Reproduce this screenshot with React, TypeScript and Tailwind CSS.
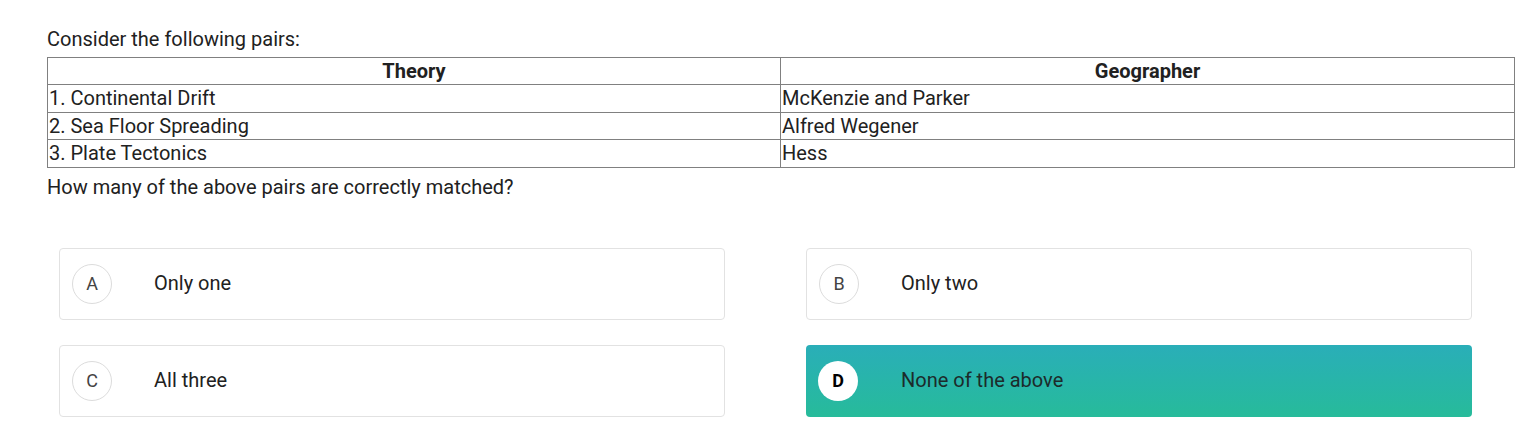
import React from "react";

const rows = [
  ["1. Continental Drift", "McKenzie and Parker"],
  ["2. Sea Floor Spreading", "Alfred Wegener"],
  ["3. Plate Tectonics", "Hess"],
];

const options = [
  { k: "A", t: "Only one" },
  { k: "B", t: "Only two" },
  { k: "C", t: "All three" },
  { k: "D", t: "None of the above", selected: true },
];

export default function App() {
  return (
    <div
      className="w-[1533px] h-[437px] bg-white pl-[47px] pt-[26px] text-[#212121] text-[20px] leading-[27px]"
      style={{ fontFamily: "Roboto, 'Liberation Sans', sans-serif" }}
    >
      <p className="mb-[4px]">Consider the following pairs:</p>
      <table className="w-[1468px] border-collapse table-fixed">
        <thead>
          <tr>
            <th className="w-[733px] border border-[#808080] font-bold text-center p-0 leading-[26px]">Theory</th>
            <th className="border border-[#808080] font-bold text-center p-0 leading-[26px]">Geographer</th>
          </tr>
        </thead>
        <tbody>
          {rows.map((r, i) => (
            <tr key={i}>
              <td className="border border-[#808080] px-[1px] py-0 leading-[26.5px]">{r[0]}</td>
              <td className="border border-[#808080] px-[1px] py-0 leading-[26.5px]">{r[1]}</td>
            </tr>
          ))}
        </tbody>
      </table>
      <p className="mt-[6px]">How many of the above pairs are correctly matched?</p>
      <div className="ml-[12px] mt-[47px] grid grid-cols-[666px_666px] gap-x-[81px] gap-y-[25px]">
        {options.map((o) =>
          o.selected ? (
            <div
              key={o.k}
              className="h-[72px] rounded-[4px] bg-gradient-to-b from-[#2aaeb8] to-[#27bb9a] flex items-center pl-[12px]"
            >
              <div className="w-[40px] h-[40px] rounded-full bg-white flex items-center justify-center text-[18px] font-bold text-black">
                {o.k}
              </div>
              <span className="ml-[43px] text-[#1c2b2b]">{o.t}</span>
            </div>
          ) : (
            <div
              key={o.k}
              className="h-[72px] rounded-[4px] border border-[#e2e2e2] bg-white flex items-center pl-[12px]"
            >
              <div className="w-[40px] h-[40px] rounded-full border border-[#dcdcdc] flex items-center justify-center text-[18px] text-[#444]">
                {o.k}
              </div>
              <span className="ml-[42px]">{o.t}</span>
            </div>
          )
        )}
      </div>
    </div>
  );
}
